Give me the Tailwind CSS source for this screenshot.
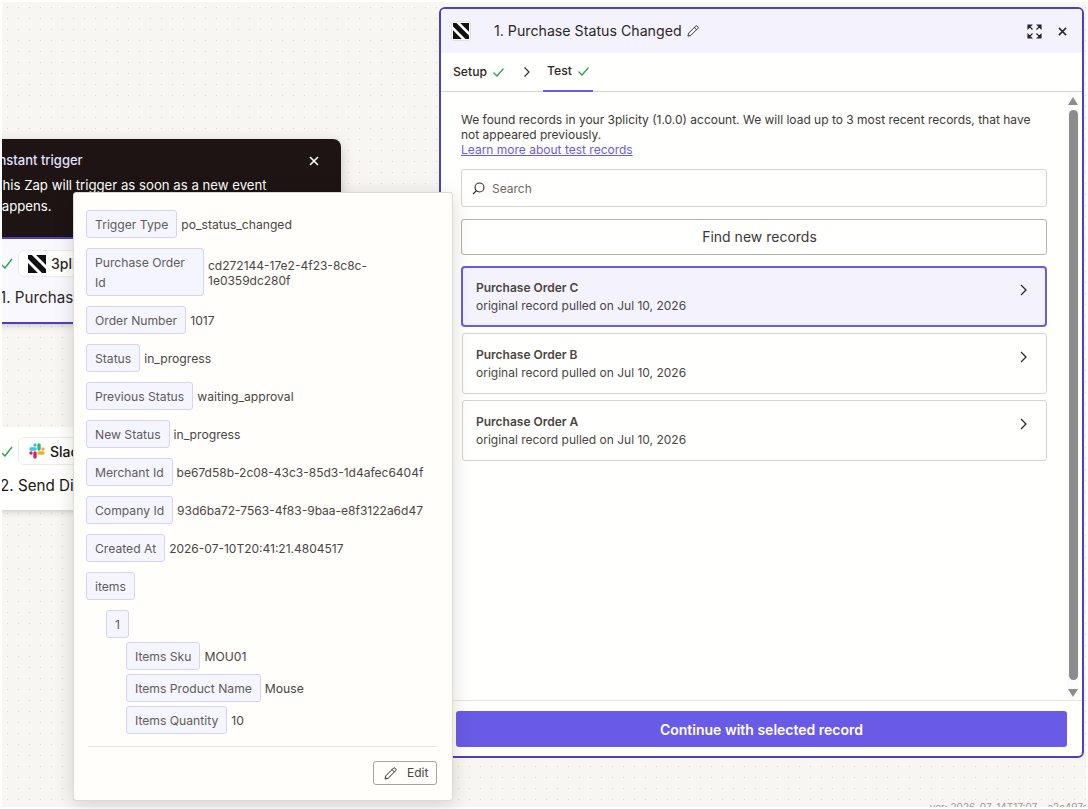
<!DOCTYPE html>
<html lang="en">
<head>
  <meta charset="UTF-8" />
  <title>Purchase Status Changed</title>
  <script src="https://cdn.jsdelivr.net/npm/@tailwindcss/browser@4"></script>
</head>
<body class="relative w-[1088px] h-[809px] overflow-hidden bg-[#fffffd] font-['Inter',sans-serif] text-[#2d2826]">

<!-- canvas -->
<div class="absolute left-[2px] top-[2px] w-[1084px] h-[805px] overflow-hidden bg-[#f7f6f3] bg-[radial-gradient(#d5d3cc_0.8px,transparent_1px)] bg-[size:11px_11px]">

  <!-- instant trigger tooltip -->
  <div class="absolute left-[-20px] top-[137px] w-[359px] h-[100px] rounded-lg bg-[#1d1413] text-[#fffffd] shadow-[0_4px_14px_rgba(0,0,0,0.2)] pl-[13px] pt-[12px]">
    <div class="flex items-center justify-between pr-[22px]">
      <span class="text-[13px] font-medium text-[#e3e1ff]">Instant trigger</span>
      <svg class="w-[10px] h-[10px]" viewBox="0 0 10 10" fill="none" stroke="#fffffd" stroke-width="1.6"><path d="M1 1l8 8M9 1l-8 8"/></svg>
    </div>
    <p class="mt-[4px] ml-[-1px] w-[290px] text-[13.2px] leading-[21px]">This Zap will trigger as soon as a new event happens.</p>
  </div>

  <!-- step 1 node -->
  <div class="absolute left-[-20px] top-[235px] w-[200px] h-[87px] bg-[#f9f8fe] border-y-2 border-[#4f3fc0] shadow-md pl-[20px]">
    <div class="flex items-center gap-[5px] pt-[11px]">
      <svg class="w-[11px] h-[11px]" viewBox="0 0 11 11" fill="none" stroke="#2f9e52" stroke-width="1.4"><path d="M0 7l3 3 7-9"/></svg>
      <div class="flex items-center gap-[5px] h-[27px] pl-[9px] pr-[7px] rounded-md border border-[#ecebe4] bg-[#fffffd]">
        <svg class="w-[18px] h-[18px]" viewBox="0 0 18 18"><rect width="18" height="18" fill="#111"/><path d="M5 -1l14 14M-1 5l14 14" stroke="#fff" stroke-width="3"/></svg>
        <span class="text-[14px] font-medium">3plicity</span>
      </div>
    </div>
    <p class="mt-[10px] ml-[-2px] text-[15.2px] whitespace-nowrap">1. Purchase Status Changed</p>
  </div>

  <!-- step 2 node -->
  <div class="absolute left-[-20px] top-[425px] w-[200px] h-[83px] bg-[#fffffd] shadow-md pl-[20px]">
    <div class="flex items-center gap-[5px] pt-[10px]">
      <svg class="w-[11px] h-[11px]" viewBox="0 0 11 11" fill="none" stroke="#2f9e52" stroke-width="1.4"><path d="M0 7l3 3 7-9"/></svg>
      <div class="flex items-center gap-[5px] h-[28px] pl-[10px] pr-[7px] rounded-md border border-[#ecebe4] bg-[#fffffd]">
        <svg class="w-[16px] h-[16px]" viewBox="0 0 16 16" fill="none" stroke-width="3.4" stroke-linecap="round">
          <path d="M6 2v0M6 6H2" stroke="#36c5f0"/><path d="M10 2v4" stroke="#2eb67d"/><path d="M14 6h0M10 10h4" stroke="#ecb22e"/><path d="M2 10h0M6 10v4" stroke="#e01e5a"/>
        </svg>
        <span class="text-[14px] font-medium text-[#1a1512]">Slack</span>
      </div>
    </div>
    <p class="mt-[10px] ml-[-2px] text-[15.2px] whitespace-nowrap text-[#1a1512]">2. Send Direct Message</p>
  </div>

  <div class="absolute right-[-6px] bottom-[-8px] text-[10px] text-[#9a9892] whitespace-nowrap">ver: 2026-07-14T17:07 - a2c497ef</div>
</div>

<!-- record details popover -->
<div class="absolute left-[73px] top-[192px] w-[380px] h-[609px] rounded-[3px] border border-[#dcdad2] bg-[#fffefb] shadow-[0_4px_20px_rgba(0,0,0,0.15)] pt-[17px] px-[12px] text-[12.15px] leading-[20px] text-[#4a4543] z-10">
  <div class="flex flex-col gap-[10px]">
    <div class="flex items-center gap-[4px]"><span class="rounded-[3px] border border-[#d4d3fb] bg-[#f5f5ff] px-[8px] pt-[4px] pb-[2px] text-[#615c59]">Trigger Type</span><span class="pt-[2px]">po_status_changed</span></div>
    <div class="flex items-center gap-[4px]"><span class="w-[118px] rounded-[3px] border border-[#d4d3fb] bg-[#f5f5ff] px-[8px] pt-[4px] pb-[2px] text-[#615c59]">Purchase Order Id</span><span class="w-[200px] pt-[2px] text-[12px] leading-[15px]">cd272144-17e2-4f23-8c8c-1e0359dc280f</span></div>
    <div class="flex items-center gap-[4px]"><span class="rounded-[3px] border border-[#d4d3fb] bg-[#f5f5ff] px-[8px] pt-[4px] pb-[2px] text-[#615c59]">Order Number</span><span class="pt-[2px]">1017</span></div>
    <div class="flex items-center gap-[4px]"><span class="rounded-[3px] border border-[#d4d3fb] bg-[#f5f5ff] px-[8px] pt-[4px] pb-[2px] text-[#615c59]">Status</span><span class="pt-[2px]">in_progress</span></div>
    <div class="flex items-center gap-[4px]"><span class="rounded-[3px] border border-[#d4d3fb] bg-[#f5f5ff] px-[8px] pt-[4px] pb-[2px] text-[#615c59]">Previous Status</span><span class="pt-[2px]">waiting_approval</span></div>
    <div class="flex items-center gap-[4px]"><span class="rounded-[3px] border border-[#d4d3fb] bg-[#f5f5ff] px-[8px] pt-[4px] pb-[2px] text-[#615c59]">New Status</span><span class="pt-[2px]">in_progress</span></div>
    <div class="flex items-center gap-[4px]"><span class="rounded-[3px] border border-[#d4d3fb] bg-[#f5f5ff] px-[8px] pt-[4px] pb-[2px] text-[#615c59]">Merchant Id</span><span class="pt-[2px] text-[12px] whitespace-nowrap">be67d58b-2c08-43c3-85d3-1d4afec6404f</span></div>
    <div class="flex items-center gap-[4px]"><span class="rounded-[3px] border border-[#d4d3fb] bg-[#f5f5ff] px-[8px] pt-[4px] pb-[2px] text-[#615c59]">Company Id</span><span class="pt-[2px] text-[12px] whitespace-nowrap">93d6ba72-7563-4f83-9baa-e8f3122a6d47</span></div>
    <div class="flex items-center gap-[4px]"><span class="rounded-[3px] border border-[#d4d3fb] bg-[#f5f5ff] px-[8px] pt-[4px] pb-[2px] text-[#615c59]">Created At</span><span class="pt-[2px] text-[12px]">2026-07-10T20:41:21.4804517</span></div>
    <div class="flex items-center gap-[4px]"><span class="rounded-[3px] border border-[#d4d3fb] bg-[#f5f5ff] px-[8px] pt-[4px] pb-[2px] text-[#615c59]">items</span></div>
    <div class="pl-[20px] flex flex-col gap-[4px]">
      <div class="flex items-center gap-[4px]"><span class="rounded-[3px] border border-[#d4d3fb] bg-[#f5f5ff] px-[8px] pt-[4px] pb-[2px] text-[#615c59]">1</span></div>
      <div class="pl-[20px] flex flex-col gap-[4px]">
        <div class="flex items-center gap-[4px]"><span class="rounded-[3px] border border-[#d4d3fb] bg-[#f5f5ff] px-[8px] pt-[4px] pb-[2px] text-[#615c59]">Items Sku</span><span class="pt-[2px]">MOU01</span></div>
        <div class="flex items-center gap-[4px]"><span class="rounded-[3px] border border-[#d4d3fb] bg-[#f5f5ff] px-[8px] pt-[4px] pb-[2px] text-[#615c59]">Items Product Name</span><span class="pt-[2px]">Mouse</span></div>
        <div class="flex items-center gap-[4px]"><span class="rounded-[3px] border border-[#d4d3fb] bg-[#f5f5ff] px-[8px] pt-[4px] pb-[2px] text-[#615c59]">Items Quantity</span><span class="pt-[2px]">10</span></div>
      </div>
    </div>
  </div>
  <div class="mt-[12px] ml-[2px] mr-[3px] border-t border-[#e8e6dd] flex justify-end pt-[14px]">
    <button class="flex items-center h-[24px] w-[64px] pl-[10px] rounded-[3px] border border-[#a8a59c] text-[12px] text-[#4a4543]">
      <svg class="w-[13px] h-[13px]" viewBox="0 0 13 13" fill="none" stroke="#2d2826" stroke-width="1"><path d="M1 12l.8-3.2L9.5 1.100a1 1 0 0 1 1.400 0l1 1a1 1 0 0 1 0 1.400L4.200 11.200z"/><path d="M8 2.600l2.400 2.400"/></svg>
      <span class="ml-[10px]">Edit</span>
    </button>
  </div>
</div>

<!-- step panel -->
<div class="absolute left-[439px] top-[7px] w-[645px] h-[751px] rounded-md border-2 border-[#4f3fc0] bg-[#fffffd] flex flex-col overflow-hidden">
  <div class="h-[44px] shrink-0 bg-[#f4f3fd] flex items-center pl-[10px] pr-[15px]">
    <span class="flex items-center justify-center w-[20px] h-[20px] rounded-[3px] border border-[#e2e0d8] bg-[#fffffd]">
      <svg class="w-[16px] h-[16px]" viewBox="0 0 18 18"><rect width="18" height="18" fill="#111"/><path d="M5 -1l14 14M-1 5l14 14" stroke="#fff" stroke-width="3"/></svg>
    </span>
    <span class="ml-[23px] text-[14.2px] text-[#2d2826]">1. Purchase Status Changed</span>
    <svg class="ml-[5px] w-[12px] h-[12px]" viewBox="0 0 13 13" fill="none" stroke="#2d2826" stroke-width="1"><path d="M1 12l.8-3.200L9.500 1.100a1 1 0 0 1 1.400 0l1 1a1 1 0 0 1 0 1.400L4.200 11.200z"/><path d="M8 2.600l2.400 2.400"/></svg>
    <svg class="ml-auto w-[15px] h-[15px]" viewBox="0 0 15 15" fill="#2d2826" stroke="#2d2826" stroke-width="1.200">
      <path d="M1 1h3.500L1 4.500zM2 2l3.500 3.500M14 1h-3.500L14 4.500zM13 2L9.500 5.500M1 14h3.500L1 10.500zM2 13l3.500-3.500M14 14h-3.500l3.500-3.500zM13 13L9.500 9.500"/>
    </svg>
    <svg class="ml-[16px] w-[9px] h-[9px]" viewBox="0 0 10 10" fill="none" stroke="#2d2826" stroke-width="1.700"><path d="M1 1l8 8M9 1l-8 8"/></svg>
  </div>
  <div class="h-[39px] shrink-0 border-b border-[#d6d4cc] flex items-stretch text-[12.2px] font-medium">
    <div class="flex items-center pl-[12px] gap-[6px]">
      <span>Setup</span>
      <svg class="w-[11px] h-[9px]" viewBox="0 0 11 9" fill="none" stroke="#2f9e52" stroke-width="1.200"><path d="M.5 4.500l3.500 3.500 6.500-7.500"/></svg>
    </div>
    <svg class="ml-[20px] self-center w-[6px] h-[10px]" viewBox="0 0 6 10" fill="none" stroke="#2d2826" stroke-width="1.100"><path d="M.5.500L5 5 .5 9.500"/></svg>
    <div class="ml-[13px] flex items-center gap-[6px] px-[4px] border-b-2 border-[#6a5be6] h-[39px] mb-[-1px]">
      <span>Test</span>
      <svg class="w-[11px] h-[9px]" viewBox="0 0 11 9" fill="none" stroke="#2f9e52" stroke-width="1.200"><path d="M.5 4.500l3.500 3.500 6.500-7.500"/></svg>
    </div>
  </div>
  <div class="relative flex-1 pl-[20px] pr-[36px] pt-[20px]">
    <p class="text-[12px] leading-[15px] text-[#3d3836]">We found records in your 3plicity (1.0.0) account. We will load up to 3 most recent records, that have not appeared previously.<br><a class="text-[#6a5be6] underline">Learn more about test records</a></p>
    <div class="mt-[12px] h-[38px] w-[586px] rounded-[3px] border border-[#d6d4cc] flex items-center pl-[10px] gap-[7px] pt-[1px]">
      <svg class="w-[13px] h-[13px]" viewBox="0 0 13 13" fill="none" stroke="#2d2826" stroke-width="1.100"><circle cx="7.500" cy="5.500" r="4.500"/><path d="M4.200 8.800L1 12"/></svg>
      <span class="text-[12px] text-[#6d6863]">Search</span>
    </div>
    <button class="mt-[12px] block h-[36px] w-[586px] rounded-[3px] border border-[#b5b2a8] pl-[11px] pb-[2px] text-[14px] text-[#3d3836]">Find new records</button>
    <div class="mt-[11px] w-[585px] flex flex-col gap-[6px] ml-[1px]">
      <div class="h-[61px] rounded-[4px] border-2 border-[#6a5be6] bg-[#f4f3fd] flex items-center justify-between pl-[13px] pr-[18px] mx-[-1px] w-[586px]">
        <div class="text-[12px] leading-[18px]"><div class="font-semibold text-[#4a4543]">Purchase Order C</div><div class="text-[#4a4543]">original record pulled on Jul 10, 2026</div></div>
        <svg class="w-[7px] h-[12px] mt-[-14px]" viewBox="0 0 7 12" fill="none" stroke="#2d2826" stroke-width="1.300"><path d="M1 1l5 5-5 5"/></svg>
      </div>
      <div class="h-[61px] rounded-[3px] border border-[#d6d4cc] flex items-center justify-between pl-[13px] pr-[19px]">
        <div class="text-[12px] leading-[18px]"><div class="font-semibold text-[#4a4543]">Purchase Order B</div><div class="text-[#4a4543]">original record pulled on Jul 10, 2026</div></div>
        <svg class="w-[7px] h-[12px] mt-[-14px]" viewBox="0 0 7 12" fill="none" stroke="#2d2826" stroke-width="1.300"><path d="M1 1l5 5-5 5"/></svg>
      </div>
      <div class="h-[61px] rounded-[3px] border border-[#d6d4cc] flex items-center justify-between pl-[13px] pr-[19px]">
        <div class="text-[12px] leading-[18px]"><div class="font-semibold text-[#4a4543]">Purchase Order A</div><div class="text-[#4a4543]">original record pulled on Jul 10, 2026</div></div>
        <svg class="w-[7px] h-[12px] mt-[-14px]" viewBox="0 0 7 12" fill="none" stroke="#2d2826" stroke-width="1.300"><path d="M1 1l5 5-5 5"/></svg>
      </div>
    </div>
    <!-- scrollbar -->
    <div class="absolute right-[3px] top-0 bottom-0 w-[12px] flex flex-col items-center bg-[#fbfbfb] pt-[5px] pb-[3px]">
      <div class="w-0 h-0 border-x-[5px] border-x-transparent border-b-[8px] border-b-[#8c8c8c]"></div>
      <div class="mt-[5px] w-[9px] flex-1 rounded-full bg-[#8c8c8c]"></div>
      <div class="mt-[9px] w-0 h-0 border-x-[5px] border-x-transparent border-t-[8px] border-t-[#8c8c8c]"></div>
    </div>
  </div>
  <div class="h-[56px] shrink-0 border-t border-[#e8e6dd] px-[15px] pt-[10px]">
    <button class="w-[611px] h-[36px] rounded-[3px] bg-[#6a5be6] text-white text-[14px] font-semibold">Continue with selected record</button>
  </div>
</div>

</body>
</html>
